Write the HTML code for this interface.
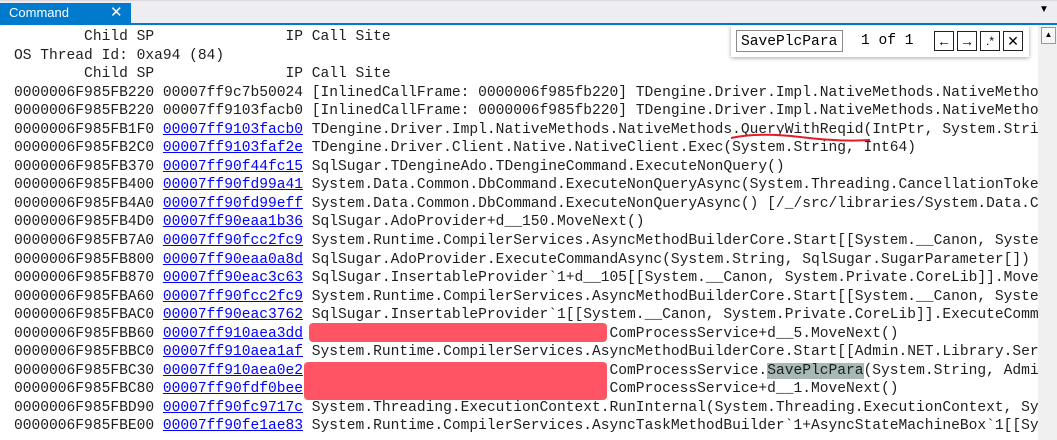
<!DOCTYPE html>
<html><head><meta charset="utf-8"><style>
body{margin:0;width:1057px;height:440px;overflow:hidden;background:#eeeef2;position:relative;font-family:"Liberation Sans",sans-serif}
.tabbar{position:absolute;left:0;top:0;width:1057px;height:23px;background:#eeeef2;border-top:1px solid #dadade}
.tab{position:absolute;left:0;top:3px;width:131px;height:20px;background:#007acc;color:#fff;font-size:13px;line-height:20px}
.tab span{position:absolute;left:9px}
.tab b{position:absolute;left:110px;top:0;font-weight:normal;font-size:15px}
.line{position:absolute;left:0;top:23px;width:1057px;height:2px;background:#007acc}
.pane{position:absolute;left:0;top:25px;width:1038px;height:415px;background:#fff;overflow:hidden}
pre{position:absolute;left:14px;top:3px;margin:0;font-family:"Liberation Mono",monospace;font-size:14.6px;line-height:18.55px;color:#1e1e1e;white-space:pre}
a{color:#0000ff;text-decoration:underline}
.hl{background:#a8b8b4}
.sb{position:absolute;left:1038px;top:25px;width:19px;height:415px;background:#f0f0f0}
.sb .up{position:absolute;left:3px;top:2px;width:13px;height:15px;border:1px solid #999;background:#f7f7f7;font-size:8px;text-align:center;line-height:14px}
.find{position:absolute;left:731px;top:26px;width:298px;height:31px;background:#fff;box-shadow:0 1px 4px rgba(0,0,0,.35)}
.inp{position:absolute;left:5px;top:4px;width:107px;height:22px;border:1px solid #8a8a8a;font-family:"Liberation Mono",monospace;font-size:14.6px;line-height:22px;padding-left:4px;box-sizing:border-box}
.cnt{position:absolute;left:130px;top:4px;font-family:"Liberation Mono",monospace;font-size:14.6px;line-height:22px}
.btn{position:absolute;top:5px;width:20px;height:20px;border:1px solid #222;box-sizing:border-box;font-size:14px;line-height:18px;text-align:center}
.red{position:absolute;background:#ff5463;border-radius:4px}
.dd{position:absolute;left:1039px;top:4px;font-size:10px}
</style></head><body>
<div class="tabbar"></div>
<div class="tab"><span>Command</span><b>✕</b></div>
<div class="dd">▼</div>
<div class="line"></div>
<div class="pane">
<pre>        Child SP               IP Call Site
OS Thread Id: 0xa94 (84)
        Child SP               IP Call Site
0000006F985FB220 00007ff9c7b50024 [InlinedCallFrame: 0000006f985fb220] TDengine.Driver.Impl.NativeMethods.NativeMethods
0000006F985FB220 00007ff9103facb0 [InlinedCallFrame: 0000006f985fb220] TDengine.Driver.Impl.NativeMethods.NativeMethods
0000006F985FB1F0 <a>00007ff9103facb0</a> TDengine.Driver.Impl.NativeMethods.NativeMethods.QueryWithReqid(IntPtr, System.String
0000006F985FB2C0 <a>00007ff9103faf2e</a> TDengine.Driver.Client.Native.NativeClient.Exec(System.String, Int64)
0000006F985FB370 <a>00007ff90f44fc15</a> SqlSugar.TDengineAdo.TDengineCommand.ExecuteNonQuery()
0000006F985FB400 <a>00007ff90fd99a41</a> System.Data.Common.DbCommand.ExecuteNonQueryAsync(System.Threading.CancellationToken)
0000006F985FB4A0 <a>00007ff90fd99eff</a> System.Data.Common.DbCommand.ExecuteNonQueryAsync() [/_/src/libraries/System.Data.Common
0000006F985FB4D0 <a>00007ff90eaa1b36</a> SqlSugar.AdoProvider+d__150.MoveNext()
0000006F985FB7A0 <a>00007ff90fcc2fc9</a> System.Runtime.CompilerServices.AsyncMethodBuilderCore.Start[[System.__Canon, System
0000006F985FB800 <a>00007ff90eaa0a8d</a> SqlSugar.AdoProvider.ExecuteCommandAsync(System.String, SqlSugar.SugarParameter[])
0000006F985FB870 <a>00007ff90eac3c63</a> SqlSugar.InsertableProvider`1+d__105[[System.__Canon, System.Private.CoreLib]].MoveNext
0000006F985FBA60 <a>00007ff90fcc2fc9</a> System.Runtime.CompilerServices.AsyncMethodBuilderCore.Start[[System.__Canon, System
0000006F985FBAC0 <a>00007ff90eac3762</a> SqlSugar.InsertableProvider`1[[System.__Canon, System.Private.CoreLib]].ExecuteCommand
0000006F985FBB60 <a>00007ff910aea3dd</a>                                   ComProcessService+d__5.MoveNext()
0000006F985FBBC0 <a>00007ff910aea1af</a> System.Runtime.CompilerServices.AsyncMethodBuilderCore.Start[[Admin.NET.Library.Service
0000006F985FBC30 <a>00007ff910aea0e2</a>                                   ComProcessService.<span class="hl">SavePlcPara</span>(System.String, Admin
0000006F985FBC80 <a>00007ff90fdf0bee</a>                                   ComProcessService+d__1.MoveNext()
0000006F985FBD90 <a>00007ff90fc9717c</a> System.Threading.ExecutionContext.RunInternal(System.Threading.ExecutionContext, System
0000006F985FBE00 <a>00007ff90fe1ae83</a> System.Runtime.CompilerServices.AsyncTaskMethodBuilder`1+AsyncStateMachineBox`1[[System</pre>
<svg style="position:absolute;left:0;top:0" width="1038" height="415"><path d="M731 113 Q760 107 800 112 T870 115" stroke="#e01b2a" stroke-width="2" fill="none"/></svg>
</div>
<div class="red" style="left:309px;top:323px;width:298px;height:19px"></div>
<div class="red" style="left:304px;top:362px;width:303px;height:38px"></div>
<div class="sb"><div class="up">▲</div></div>
<div class="find">
<div class="inp">SavePlcPara</div>
<div class="cnt">1 of 1</div>
<div class="btn" style="left:203px">←</div>
<div class="btn" style="left:226px">→</div>
<div class="btn" style="left:249px;font-size:12px">.*</div>
<div class="btn" style="left:272px">✕</div>
</div>
</body></html>
